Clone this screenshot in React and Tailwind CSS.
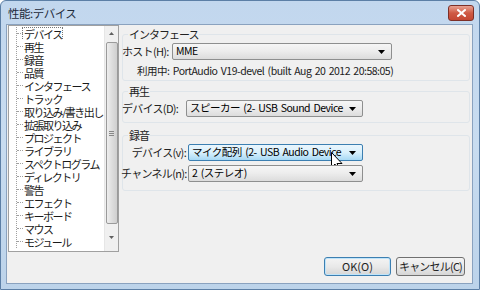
import React from 'react';

const treeItems = [
  'デバイス',
  '再生',
  '録音',
  '品質',
  'インタフェース',
  'トラック',
  '取り込み/書き出し',
  '拡張取り込み',
  'プロジェクト',
  'ライブラリ',
  'スペクトログラム',
  'ディレクトリ',
  '警告',
  'エフェクト',
  'キーボード',
  'マウス',
  'モジュール',
];

const font = { fontFamily: '"Noto Sans CJK JP", "Noto Sans", sans-serif' };

const Arrow = () => (
  <svg width="7" height="4" viewBox="0 0 7 4" className="shrink-0">
    <path d="M0 0 H7 L3.5 4 Z" fill="#000" />
  </svg>
);

// combo box, normal or hovered
const Combo = ({ text, width, hover, children }) => (
  <div
    className={
      'relative shrink-0 h-[17px] flex items-center justify-between pl-[3px] pr-[6px] rounded-[2px] border ' +
      (hover
        ? 'border-[#3c7fb1] bg-gradient-to-b from-[#eaf6fd] via-[#d9f0fc] to-[#a7d9f5]'
        : 'border-[#8e8f8f] bg-gradient-to-b from-[#f6f6f6] via-[#ececec] to-[#dcdcdc]')
    }
    style={{ width }}
  >
    <span className="text-[10.5px] leading-none text-black whitespace-nowrap tracking-[-0.5px] [word-spacing:1.5px]">
      {text}
    </span>
    <Arrow />
    {children}
  </div>
);

const Label = ({ children, className }) => (
  <span className={'shrink-0 text-[11px] leading-none text-[#222] whitespace-nowrap tracking-[-0.7px] ' + className}>
    {children}
  </span>
);

const Group = ({ label, className, children }) => (
  <div className={'border border-[#dfe5ea] rounded-[3px] ' + className}>
    <div className="-mt-[8px] ml-[5px] px-[1px] w-fit bg-[#f0f0f0] text-[11px] leading-[14px] text-[#222] tracking-[-1px]">
      {label}
    </div>
    {children}
  </div>
);

const Cursor = () => (
  <svg width="12" height="19" viewBox="0 0 12 19" className="absolute left-[142px] top-[7px]">
    <path d="M0.5 0.5 V15.5 L4 12 L6.5 18 L8.5 17 L6 11.5 H11 Z" fill="#fff" stroke="#000" strokeWidth="1" />
  </svg>
);

export default function App() {
  return (
    <div
      className="w-[480px] h-[290px] flex flex-col bg-gradient-to-b from-[#c2d7ee] via-[#c8dcf0] to-[#bcd3ea] border border-[#5c7fa6] rounded-t-[6px]"
      style={font}
    >
      {/* title bar */}
      <div className="h-[23px] flex items-center justify-between pl-[7px] pr-[5px]">
        <span className="text-[11.5px] text-[#1e2b3c] leading-none mt-[2px] tracking-[-0.5px]">性能:デバイス</span>
        <div className="w-[26px] h-[16px] mt-[1px] rounded-[3px] border border-[#7d2f27] bg-gradient-to-b from-[#e8a192] via-[#cf5a44] to-[#c44733] flex items-center justify-center">
          <svg width="9" height="8" viewBox="0 0 9 8">
            <path d="M1 1 L8 7 M8 1 L1 7" stroke="#fff" strokeWidth="2" strokeLinecap="square" />
          </svg>
        </div>
      </div>

      {/* client */}
      <div className="flex-1 ml-[5px] mr-[6px] mb-[5px] bg-[#f0f0f0] border border-[#8aa2bf] flex flex-col">
        <div className="flex">
          {/* tree list */}
          <div className="w-[111px] shrink-0 h-[227px] ml-[1px] border border-[#a0a0a0] bg-white flex overflow-hidden">
            <div className="flex-1 min-w-0 pt-[1px] overflow-hidden">
              <div className="ml-[7px] border-l border-dotted border-[#a0a0a0]">
                {treeItems.map((t, i) => (
                  <div key={t} className="h-[13px] flex items-center overflow-hidden">
                    <div className="w-[6px] shrink-0 border-t border-dotted border-[#a0a0a0]" />
                    <span
                      className={
                        'shrink-0 text-[11px] leading-[12px] text-[#1a1a1a] whitespace-nowrap pl-[1px] tracking-[-1.5px] ' +
                        (i === 0 ? 'outline outline-1 outline-dotted outline-[#777]' : '')
                      }
                    >
                      {t}
                    </span>
                  </div>
                ))}
              </div>
            </div>
            {/* scrollbar */}
            <div className="w-[14px] shrink-0 bg-[#f0f0f0] border-l border-[#e6e6e6] flex flex-col items-center">
              <div className="h-[15px] flex items-center justify-center">
                <svg width="5" height="3" viewBox="0 0 5 3">
                  <path d="M0 3 L2.5 0 L5 3 Z" fill="#606060" />
                </svg>
              </div>
              <div className="w-[12px] h-[182px] mt-[1px] rounded-[2px] border border-[#9a9a9a] bg-gradient-to-r from-[#eeeeee] via-[#dddddd] to-[#cfcfcf] flex items-center justify-center">
                <div className="flex flex-col gap-[1px]">
                  <div className="w-[5px] h-[1px] bg-[#888]" />
                  <div className="w-[5px] h-[1px] bg-[#888]" />
                  <div className="w-[5px] h-[1px] bg-[#888]" />
                </div>
              </div>
              <div className="flex-1 flex items-center justify-center">
                <svg width="5" height="3" viewBox="0 0 5 3">
                  <path d="M0 0 L2.5 3 L5 0 Z" fill="#606060" />
                </svg>
              </div>
            </div>
          </div>

          {/* right panel */}
          <div className="flex-1 min-w-0 pl-[3px] pr-[2px] pt-[9px] flex flex-col">
            <Group label="インタフェース" className="h-[47px]">
              <div className="flex items-center mt-[2px] -ml-[1px]">
                <Label className="w-[50px]">ホスト(H):</Label>
                <Combo text="MME" width={220} />
              </div>
              <div className="mt-[4px] ml-[14px] text-[10.5px] leading-[14px] text-[#222] whitespace-nowrap tracking-[-0.5px] [word-spacing:1.5px]">
                利用中: PortAudio V19-devel (built Aug 20 2012 20:58:05)
              </div>
            </Group>

            <Group label="再生" className="h-[32px] mt-[10px]">
              <div className="flex items-center mt-[2px] -ml-[1px]">
                <Label className="w-[64px]">デバイス(D):</Label>
                <Combo text="スピーカー (2- USB Sound Device" width={177} />
              </div>
            </Group>

            <Group label="録音" className="h-[56px] mt-[12px]">
              <div className="flex flex-col items-start mt-[2px] gap-[4px] -ml-[2px]">
                <div className="flex items-center">
                  <Label className="w-[67px] text-right pr-[2px]">デバイス(v):</Label>
                  <Combo text="マイク配列 (2- USB Audio Device" width={175} hover>
                    <Cursor />
                  </Combo>
                </div>
                <div className="flex items-center">
                  <Label className="w-[67px] text-right pr-[2px]">チャンネル(n):</Label>
                  <Combo text="2 (ステレオ)" width={175} />
                </div>
              </div>
            </Group>
          </div>
        </div>

        {/* buttons */}
        <div className="flex justify-end gap-[5px] pr-[7px] mt-[5px]">
          <div className="w-[67px] h-[19px] rounded-[3px] border border-[#3c7fb1] bg-gradient-to-b from-[#f4f4f4] via-[#e9e9e9] to-[#d6d6d6] shadow-[inset_0_0_0_1px_#bfe4fa] flex items-center justify-center text-[11px] text-[#222] whitespace-nowrap">
            OK(O)
          </div>
          <div className="w-[69px] h-[19px] rounded-[3px] border border-[#707070] bg-gradient-to-b from-[#f4f4f4] via-[#e9e9e9] to-[#d6d6d6] flex items-center justify-center text-[11px] text-[#222] whitespace-nowrap tracking-[-0.8px]">
            キャンセル(C)
          </div>
        </div>
      </div>
    </div>
  );
}
